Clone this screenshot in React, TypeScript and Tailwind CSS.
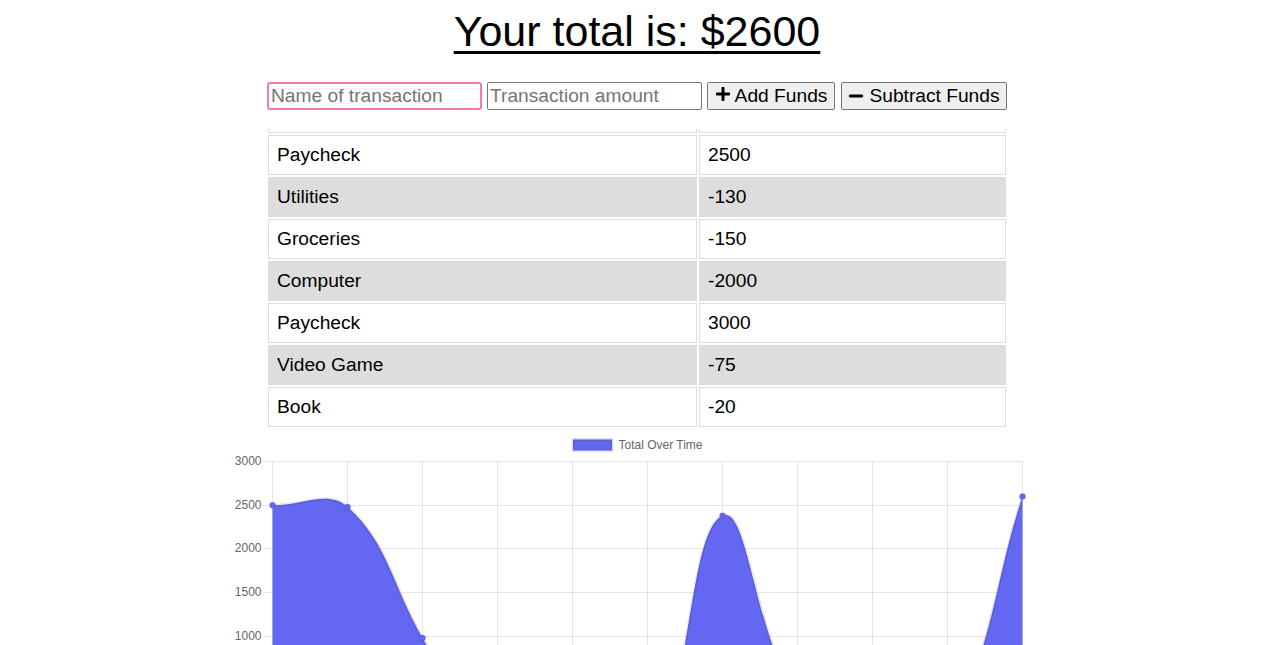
import { FaPlus, FaMinus } from "react-icons/fa";

type Pt = { x: number; y: number };

const transactions = [
  { name: "Paycheck", value: 2500 },
  { name: "Utilities", value: -130 },
  { name: "Groceries", value: -150 },
  { name: "Computer", value: -2000 },
  { name: "Paycheck", value: 3000 },
  { name: "Video Game", value: -75 },
  { name: "Book", value: -20 },
];

// running totals drawn by the chart (lower ones fall below the fold)
const totals = [2500, 2480, 980, -500, -500, -500, 2380, 300, 0, 0, 2600];

const X0 = 272.5;
const STEP = 75;
const TOP = 461.5;
const PX = 43.67 / 500;
const yOf = (v: number) => TOP + (3000 - v) * PX;
const BOTTOM = yOf(-500);
const RIGHT = X0 + STEP * (totals.length - 1);

function splinePath(pts: Pt[]) {
  const clamp = (p: Pt): Pt => ({
    x: Math.min(Math.max(p.x, X0), RIGHT),
    y: Math.min(Math.max(p.y, TOP), BOTTOM),
  });
  const ctrl = pts.map((p, i) => {
    const prev = pts[i - 1] ?? p;
    const next = pts[i + 1] ?? p;
    const d01 = Math.hypot(p.x - prev.x, p.y - prev.y);
    const d12 = Math.hypot(next.x - p.x, next.y - p.y);
    const s01 = d01 + d12 ? d01 / (d01 + d12) : 0;
    const s12 = d01 + d12 ? d12 / (d01 + d12) : 0;
    const fa = 0.4 * s01;
    const fb = 0.4 * s12;
    return {
      prev: clamp({ x: p.x - fa * (next.x - prev.x), y: p.y - fa * (next.y - prev.y) }),
      next: clamp({ x: p.x + fb * (next.x - prev.x), y: p.y + fb * (next.y - prev.y) }),
    };
  });
  let d = `M${pts[0].x} ${pts[0].y}`;
  for (let i = 1; i < pts.length; i++) {
    const a = ctrl[i - 1].next;
    const b = ctrl[i].prev;
    d += ` C${a.x} ${a.y} ${b.x} ${b.y} ${pts[i].x} ${pts[i].y}`;
  }
  return d;
}

function Chart() {
  const pts = totals.map((v, i) => ({ x: X0 + i * STEP, y: yOf(v) }));
  const line = splinePath(pts);
  const zero = yOf(0);
  const area = `${line} L${RIGHT} ${zero} L${X0} ${zero} Z`;
  const ticks = [3000, 2500, 2000, 1500, 1000, 500, 0, -500];

  return (
    <svg className="block w-full h-[215px]" viewBox="0 430 1274 215">
      <rect x={573} y={439.5} width={39} height={11} fill="#6467f2" stroke="rgba(0,0,0,0.1)" strokeWidth={3} />
      <text x={618.5} y={445.5} dominantBaseline="middle" fontSize={12} fill="#666" fontFamily="Liberation Sans, Arial, sans-serif">
        Total Over Time
      </text>

      {ticks.map((t) => {
        const y = Math.floor(yOf(t)) + 0.5;
        return (
          <g key={t}>
            <line x1={263} x2={RIGHT} y1={y} y2={y} stroke="rgba(0,0,0,0.1)" />
            {t >= 1000 && (
              <text x={261.5} y={y} textAnchor="end" dominantBaseline="middle" fontSize={12} fill="#666" fontFamily="Liberation Sans, Arial, sans-serif">
                {t}
              </text>
            )}
          </g>
        );
      })}
      {totals.map((_, i) => (
        <line key={i} x1={X0 + i * STEP} x2={X0 + i * STEP} y1={TOP} y2={BOTTOM + 10} stroke="rgba(0,0,0,0.1)" />
      ))}

      <path d={area} fill="#6467f2" />
      <path d={line} fill="none" stroke="rgba(0,0,0,0.1)" strokeWidth={3} />
      {pts.map((p, i) => (
        <circle key={i} cx={p.x} cy={p.y} r={3} fill="#6467f2" stroke="rgba(0,0,0,0.1)" strokeWidth={1} />
      ))}
    </svg>
  );
}

export default function App() {
  return (
    <div className="h-[645px] overflow-hidden bg-white pr-[3px] font-['Liberation_Sans',Arial,sans-serif] text-black">
      <h1 className="pt-[7px] text-center text-[43px] leading-[49px] underline decoration-[3px] underline-offset-[5px]">
        Your total is: $2600
      </h1>

      <div className="mt-[26px] flex justify-center text-[19.2px]">
        <input
          className="h-[28px] w-[215px] rounded-[3px] border-2 border-[#f27ab4] px-[2px] text-[19.2px] outline-none placeholder:text-[#757575]"
          placeholder="Name of transaction"
        />
        <input
          className="ml-[5px] h-[28px] w-[215px] rounded-[2px] border border-[#767676] px-[2px] text-[19.2px] outline-none placeholder:text-[#757575]"
          placeholder="Transaction amount"
        />
        <button className="ml-[5px] flex h-[28px] w-[128px] items-center justify-center gap-[4px] rounded-[2px] border border-[#767676] bg-[#efefef]">
          <FaPlus size={16} className="-translate-y-[2px]" />
          <span>Add Funds</span>
        </button>
        <button className="ml-[6px] flex h-[28px] w-[166px] items-center justify-center gap-[5px] rounded-[2px] border border-[#767676] bg-[#efefef]">
          <FaMinus size={16} />
          <span>Subtract Funds</span>
        </button>
      </div>

      <table className="mx-auto mt-[17px] w-[742px] border-separate border-spacing-[2px] text-[19.2px]">
        <thead>
          <tr>
            <th className="h-[4px] w-[429px] border-x border-b border-[#ddd] p-0" />
            <th className="h-[4px] border-x border-b border-[#ddd] p-0" />
          </tr>
        </thead>
        <tbody>
          {transactions.map((t, i) => (
            <tr key={i} className={i % 2 === 1 ? "bg-[#dddddd]" : "bg-white"}>
              <td className="border border-[#ddd] px-[8px] py-[8px] leading-[22px]">{t.name}</td>
              <td className="border border-[#ddd] px-[8px] py-[8px] leading-[22px]">{t.value}</td>
            </tr>
          ))}
        </tbody>
      </table>

      <div className="mt-[1px]">
        <Chart />
      </div>
    </div>
  );
}
